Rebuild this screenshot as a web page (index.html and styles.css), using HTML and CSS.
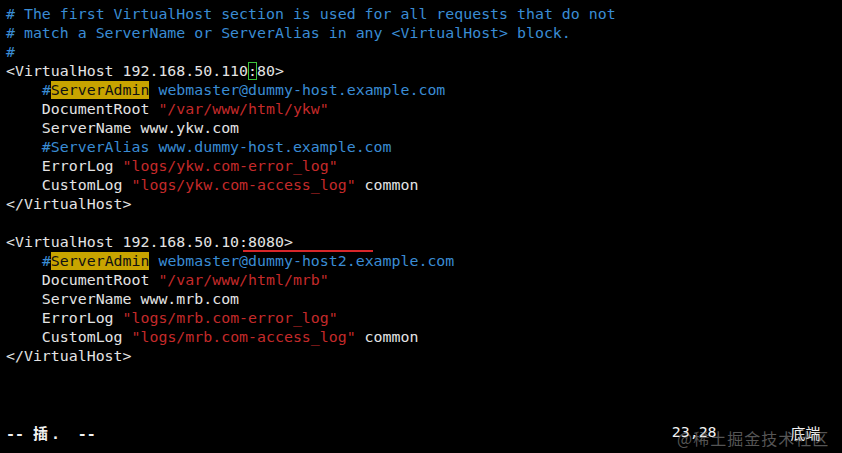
FILE: index.html
```html
<!DOCTYPE html>
<html>
<head>
<meta charset="utf-8">
<link rel="stylesheet" href="styles.css">
</head>
<body>
<div class="term">
<div class="ln c"># The first VirtualHost section is used for all requests that do not</div>
<div class="ln c"># match a ServerName or ServerAlias in any &lt;VirtualHost&gt; block.</div>
<div class="ln c">#</div>
<div class="ln">&lt;VirtualHost 192.168.50.110<span class="cur">:</span>80&gt;</div>
<div class="ln">    <span class="c">#</span><span class="hl">ServerAdmin</span> <span class="c">webmaster@dummy-host.example.com</span></div>
<div class="ln">    DocumentRoot <span class="s">"/var/www/html/ykw"</span></div>
<div class="ln">    ServerName www.ykw.com</div>
<div class="ln c">    #ServerAlias www.dummy-host.example.com</div>
<div class="ln">    ErrorLog <span class="s">"logs/ykw.com-error_log"</span></div>
<div class="ln">    CustomLog <span class="s">"logs/ykw.com-access_log"</span> common</div>
<div class="ln">&lt;/VirtualHost&gt;</div>
<div class="ln"> </div>
<div class="ln mark">&lt;VirtualHost 192.168.50.10:8080&gt;<span class="underline"></span></div>
<div class="ln">    <span class="c">#</span><span class="hl">ServerAdmin</span> <span class="c">webmaster@dummy-host2.example.com</span></div>
<div class="ln">    DocumentRoot <span class="s">"/var/www/html/mrb"</span></div>
<div class="ln">    ServerName www.mrb.com</div>
<div class="ln">    ErrorLog <span class="s">"logs/mrb.com-error_log"</span></div>
<div class="ln">    CustomLog <span class="s">"logs/mrb.com-access_log"</span> common</div>
<div class="ln">&lt;/VirtualHost&gt;</div>
<div class="ln"> </div>
<div class="ln"> </div>
<div class="ln"> </div>
<div class="status">
  <span class="mode">-- <span class="wide">插</span>.  --</span>
  <span class="ruler">23,28</span>
  <span class="pos">底端</span>
  <span class="wm">@稀土掘金技术社区</span>
</div>
</div>
</body>
</html>
```

FILE: styles.css
```css
html, body {
  margin: 0;
  padding: 0;
  background: #000;
  width: 842px;
  height: 453px;
  overflow: hidden;
}

.term {
  position: relative;
  padding: 5px 0 0 6px;
  font-family: "DejaVu Sans Mono", "Noto Sans CJK SC", monospace;
  font-size: 14.9px;
  line-height: 19px;
  color: #e4e4e4;
  height: 448px;
}

.ln {
  white-space: pre;
  height: 19px;
}

.c { color: #3a8cd4; }
.s { color: #c42a2a; }

.hl {
  background: #c8a400;
  color: #111;
}

.cur {
  outline: 1px solid #3cc43c;
  outline-offset: -1px;
}

.mark {
  position: relative;
}

.underline {
  position: absolute;
  left: 237px;
  top: 17px;
  width: 130px;
  height: 2px;
  background: #d8262a;
}

.status {
  position: relative;
  display: flex;
  height: 19px;
  white-space: pre;
  color: #f2f2f2;
  font-family: "DejaVu Sans Mono", "Noto Sans CJK SC", monospace;
}

.mode {
  font-weight: bold;
}

.wide {
  display: inline-block;
  width: 18px;
  font-family: "Noto Sans CJK SC", sans-serif;
  font-size: 15px;
}

.ruler {
  margin-left: 576px;
}

.pos {
  margin-left: 74px;
  font-family: "Noto Sans CJK SC", sans-serif;
}

.wm {
  position: absolute;
  left: 671px;
  top: 6px;
  font-family: "Noto Sans CJK SC", sans-serif;
  font-size: 16px;
  color: rgba(170, 170, 170, 0.5);
  letter-spacing: 1px;
}
```
